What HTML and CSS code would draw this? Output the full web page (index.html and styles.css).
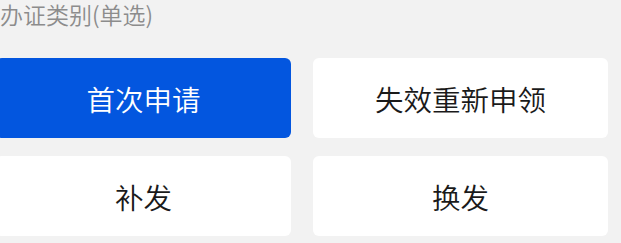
FILE: index.html
```html
<!DOCTYPE html>
<html lang="zh-CN">
<head>
<meta charset="utf-8">
<title>办证类别</title>
<link rel="stylesheet" href="styles.css">
</head>
<body>
<div class="page">
  <div class="section-title">办证类别(单选)</div>
  <div class="options">
    <div class="option active">首次申请</div>
    <div class="option">失效重新申领</div>
    <div class="option">补发</div>
    <div class="option">换发</div>
  </div>
</div>
</body>
</html>
```

FILE: styles.css
```css
html, body {
  margin: 0;
  padding: 0;
  background: #f2f2f2;
  overflow: hidden;
}
body {
  font-family: "Noto Sans CJK SC", "Noto Sans", sans-serif;
  width: 621px;
  height: 243px;
}
.page {
  display: flex;
  flex-direction: column;
}
.section-title {
  font-size: 23px;
  line-height: 24px;
  font-weight: 350;
  color: #8c8c8c;
  height: 30px;
  margin-top: 2px;
}
.options {
  margin-top: 26px;
  margin-left: -4px;
  display: grid;
  grid-template-columns: 295px 295px;
  grid-auto-rows: 80px;
  column-gap: 22px;
  row-gap: 18px;
}
.option {
  background: #ffffff;
  border-radius: 6px;
  display: flex;
  align-items: center;
  justify-content: center;
  font-size: 28.5px;
  font-weight: 350;
  color: #1a1a1a;
}
.option.active {
  background: #0356df;
  color: #ffffff;
}
```
